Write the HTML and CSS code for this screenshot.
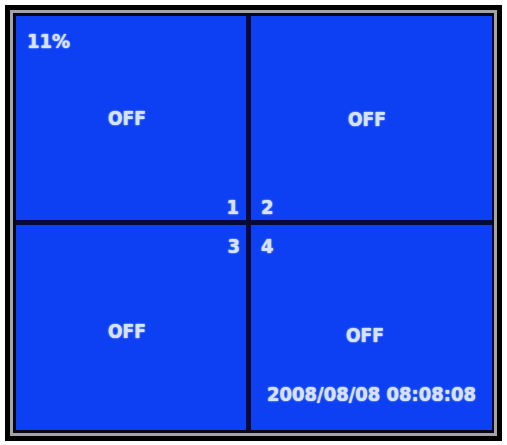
FILE: index.html
```html
<!DOCTYPE html>
<html>
<head>
<meta charset="utf-8">
<link rel="stylesheet" href="styles.css">
</head>
<body>
<div class="frame">
  <div class="bezel">
    <div class="screen">
      <div class="cell c1">
        <div class="osd pct">11%</div>
        <div class="osd off">OFF</div>
        <div class="osd num">1</div>
      </div>
      <div class="cell c2">
        <div class="osd off">OFF</div>
        <div class="osd num">2</div>
      </div>
      <div class="cell c3">
        <div class="osd num">3</div>
        <div class="osd off">OFF</div>
      </div>
      <div class="cell c4">
        <div class="osd num">4</div>
        <div class="osd off">OFF</div>
        <div class="osd date">2008/08/08 08:08:08</div>
      </div>
    </div>
  </div>
</div>
</body>
</html>
```
FILE: styles.css
```css
html, body {
  margin: 0;
  padding: 0;
  background: #ffffff;
}
body {
  width: 507px;
  height: 445px;
  overflow: hidden;
}
.frame {
  margin: 5px 0 0 5px;
  width: 487px;
  border: 5px solid #000000;
}
.bezel {
  border: 3px solid #a4a4a4;
}
.screen {
  border: 3px solid #06061c;
  display: grid;
  grid-template-columns: 230px 241px;
  grid-template-rows: 204px 205px;
  gap: 5px;
  background: #050a3a;
}
.cell {
  background: #0c40f2;
  display: flex;
  flex-direction: column;
  box-sizing: border-box;
}
.osd {
  font-family: "DejaVu Sans", sans-serif;
  font-stretch: condensed;
  font-weight: bold;
  font-size: 20px;
  line-height: 20px;
  color: #d6e2ff;
  text-shadow: 0 0 2px rgba(180, 205, 255, 0.9), 0 0 1px rgba(200, 220, 255, 0.9);
  white-space: nowrap;
}
.osd.off {
  font-size: 19px;
  line-height: 19px;
}
.c1 {
  padding: 15px 7px 3px 11px;
}
.c1 .off {
  margin-top: 58px;
  margin-left: 81px;
}
.c1 .num {
  margin-top: auto;
  align-self: flex-end;
}
.c2 {
  padding: 94px 0 3px 10px;
}
.c2 .off {
  margin-left: 87px;
}
.c2 .num {
  margin-top: auto;
}
.c3 {
  padding: 11px 6px 0 0;
}
.c3 .num {
  align-self: flex-end;
}
.c3 .off {
  margin-top: 66px;
  margin-left: 92px;
}
.c4 {
  padding: 11px 0 0 10px;
}
.c4 .off {
  margin-top: 70px;
  margin-left: 85px;
}
.c4 .date {
  margin-top: 39px;
  margin-left: 6px;
}
```
